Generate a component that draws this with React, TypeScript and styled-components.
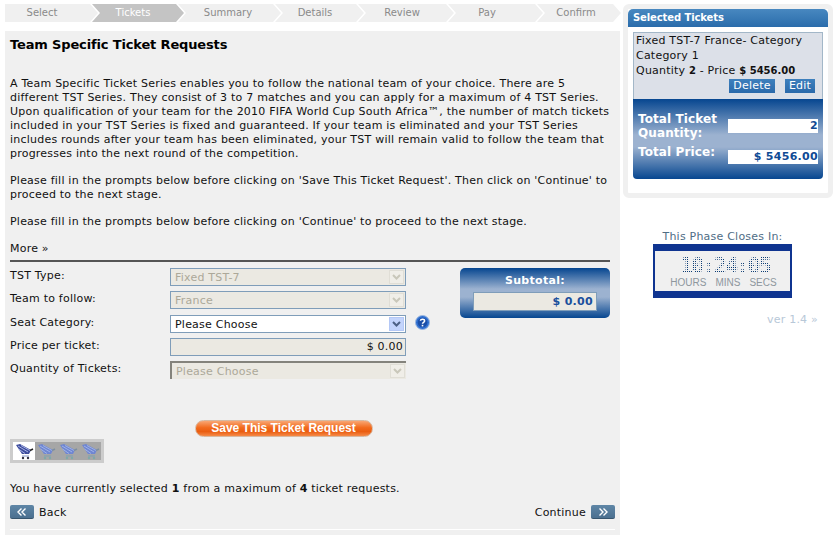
import React from "react";
import styled, { createGlobalStyle } from "styled-components";

const GlobalStyle = createGlobalStyle`
  html, body {
    margin: 0;
    padding: 0;
    background: #fff;
    font-family: "DejaVu Sans", Verdana, sans-serif;
    font-size: 11px;
    letter-spacing: 0.22px;
    color: #111;
  }
`;

const Page = styled("div")`
  display: flex;
  width: 839px;
  height: 540px;
  overflow: hidden;
  padding: 4px 0 0 5px;
  box-sizing: border-box;
`;

const LeftColumn = styled("div")`
  width: 615px;
  flex: none;
  display: flex;
  flex-direction: column;
`;

const StepBar = styled("div")`
  display: flex;
  height: 18px;
  margin-bottom: 9px;
`;

const Step = styled("div")<{ $active?: boolean; $first?: boolean; $width: number; $shift: number }>`
  flex: none;
  width: ${(p) => p.$width}px;
  height: 18px;
  box-sizing: border-box;
  line-height: 17px;
  text-align: center;
  margin-right: -6px;
  padding-right: ${(p) => p.$shift}px;
  font-size: 10px;
  letter-spacing: 0;
  background: ${(p) => (p.$active ? "#c4c4c4" : "#f0f0f0")};
  color: ${(p) => (p.$active ? "#fff" : "#8a8a8a")};
  clip-path: ${(p) =>
    p.$first
      ? "polygon(0 0, calc(100% - 8px) 0, 100% 50%, calc(100% - 8px) 100%, 0 100%)"
      : "polygon(0 0, calc(100% - 8px) 0, 100% 50%, calc(100% - 8px) 100%, 0 100%, 8px 50%)"};
`;

const MainPanel = styled("div")`
  background: #f0f0f0;
  height: 504px;
  padding: 0 5px;
  box-sizing: border-box;
  display: flex;
  flex-direction: column;
`;

const Title = styled("h1")`
  margin: 6px 0 24px;
  font-size: 13px;
  line-height: 16px;
  font-weight: bold;
  letter-spacing: -0.15px;
  color: #000;
`;

const Para = styled("p")`
  margin: 0 0 13px;
  line-height: 14px;
  font-size: 11px;
  white-space: nowrap;
`;

const Rule = styled("div")`
  height: 2px;
  width: 600px;
  background: #555;
  margin: -9px 0 6px;
`;

const FormArea = styled("div")`
  display: flex;
  height: 150px;
`;

const Fields = styled("div")`
  width: 450px;
  flex: none;
  display: flex;
  flex-direction: column;
  gap: 5px;
`;

const FieldRow = styled("div")<{ $nudge?: boolean }>`
  display: flex;
  align-items: center;
  height: 18px;
  margin-top: ${(p) => (p.$nudge ? 1 : 0)}px;
`;

const FieldLabel = styled("span")`
  width: 160px;
  margin-top: -4px;
  flex: none;
`;

const SelectBox = styled("div")<{ $disabled?: boolean; $inset?: boolean }>`
  width: 236px;
  height: 18px;
  box-sizing: border-box;
  display: flex;
  align-items: center;
  justify-content: space-between;
  padding: 0 1px 0 4px;
  border: 1px solid #7f9db9;
  ${(p) => p.$inset && "border-color: #84837c #ebe9e2 #ebe9e2 #84837c; border-width: 2px 0 0 2px;"}
  background: ${(p) => (p.$disabled ? "#ebe9e2" : "#fff")};
  color: ${(p) => (p.$disabled ? "#aca899" : "#111")};
`;

const ArrowBox = styled("div")<{ $disabled?: boolean }>`
  width: 15px;
  height: 14px;
  display: flex;
  align-items: center;
  justify-content: center;
  background: ${(p) => (p.$disabled ? "#f0eee8" : "#c3d4fc")};
  border: 1px solid ${(p) => (p.$disabled ? "#e0ded6" : "#b4c8f6")};
  box-sizing: border-box;
`;

const PriceBox = styled("div")`
  width: 236px;
  height: 18px;
  box-sizing: border-box;
  border: 1px solid #7f9db9;
  background: #ebe9e2;
  text-align: right;
  line-height: 16px;
  padding-right: 2px;
`;

const HelpIcon = styled("svg")`
  margin: -3px 0 0 9px;
  flex: none;
`;

const SubtotalBox = styled("div")`
  width: 150px;
  height: 50px;
  flex: none;
  border-radius: 5px;
  background: linear-gradient(#064690 0%, #9cb2d0 42%, #9cb2d0 58%, #064690 100%);
  display: flex;
  flex-direction: column;
  align-items: center;
  color: #fff;
  font-weight: bold;
  letter-spacing: 0.3px;
  padding-top: 6px;
  box-sizing: border-box;
`;

const SubtotalValue = styled("div")`
  width: 124px;
  height: 19px;
  margin-top: 5px;
  box-sizing: border-box;
  border: 1px solid #7f9db9;
  background: #ebe9e2;
  color: #1a4f9c;
  text-align: right;
  line-height: 17px;
  padding-right: 3px;
`;

const SaveRow = styled("div")`
  display: flex;
  justify-content: center;
  padding-right: 58px;
  margin-top: 2px;
`;

const SaveButton = styled("button")`
  width: 178px;
  height: 17px;
  padding: 0;
  border: 1px solid #d8b8a0;
  border-radius: 9px;
  background: linear-gradient(#f9a673 0%, #f26a1d 45%, #ea5d10 70%, #f58a48 100%);
  color: #fff;
  font-family: "Liberation Sans", Arial, sans-serif;
  font-size: 12px;
  font-weight: bold;
  letter-spacing: 0;
  line-height: 15px;
`;

const CartStrip = styled("div")`
  width: 94px;
  height: 24px;
  margin-top: 2px;
  background: #cccccc;
  padding: 3px;
  box-sizing: border-box;
  display: flex;
`;

const CartCell = styled("div")<{ $on?: boolean }>`
  width: 22px;
  height: 18px;
  background: ${(p) => (p.$on ? "#fff" : "#a6a6a6")};
  display: flex;
  align-items: center;
  justify-content: center;
`;

const SelectedNote = styled("p")`
  margin: 19px 0 0;
  line-height: 14px;
`;

const NavRow = styled("div")`
  display: flex;
  justify-content: space-between;
  align-items: center;
  margin-top: 9px;
  height: 14px;
`;

const NavLink = styled("div")`
  display: flex;
  align-items: center;
  gap: 5px;
`;

const NavButton = styled("div")`
  width: 24px;
  height: 14px;
  border-radius: 2px;
  background: linear-gradient(#5f86a6, #4b7090);
  border-bottom: 1px solid #37556e;
  box-sizing: border-box;
  display: flex;
  align-items: center;
  justify-content: center;
`;

const BottomLine = styled("div")`
  height: 1px;
  background: #fff;
  margin-top: 10px;
`;

const SideColumn = styled("div")`
  margin-left: 3px;
  width: 210px;
  flex: none;
  display: flex;
  flex-direction: column;
`;

const SidePanel = styled("div")`
  height: 194px;
  border: 5px solid #f0f0f0;
  border-radius: 6px;
  box-sizing: border-box;
  background: #fff;
  width: 210px;
`;

const SideHeader = styled("div")`
  height: 18px;
  background: linear-gradient(#4888c0, #2a6cab);
  border-radius: 5px 5px 0 0;
  color: #fff;
  font-size: 10px;
  font-weight: bold;
  line-height: 18px;
  padding-left: 5px;
  letter-spacing: -0.1px;
  width: 200px;
  box-sizing: border-box;
`;

const TicketBox = styled("div")`
  width: 190px;
  height: 67px;
  margin: 5px 0 0 5px;
  box-sizing: border-box;
  background: #dce0e8;
  border: 1px solid #a3b7c8;
  border-bottom: 0;
  padding: 0 2px;
  line-height: 15px;
  white-space: nowrap;

  b {
    font-size: 10px;
    letter-spacing: 0;
  }
`;

const TicketActions = styled("div")`
  display: flex;
  justify-content: flex-end;
  gap: 10px;
  margin-top: 1px;
  padding-right: 5px;
`;

const TicketAction = styled("div")<{ $wide?: boolean }>`
  width: ${(p) => (p.$wide ? 46 : 30)}px;
  height: 14px;
  background: linear-gradient(#3e80bd, #2a69aa);
  color: #fff;
  text-align: center;
  line-height: 14px;
`;

const TotalsBox = styled("div")`
  width: 190px;
  height: 80px;
  margin-left: 5px;
  box-sizing: border-box;
  border-radius: 0 0 4px 4px;
  background: linear-gradient(#064690 0%, #9cb2d0 45%, #9cb2d0 60%, #064690 100%);
  padding: 13px 5px 0 5px;
  display: grid;
  grid-template-columns: 90px 90px;
  align-content: start;
  row-gap: 5px;
  color: #fff;
  font-weight: bold;
  font-size: 12px;
  line-height: 14px;
  letter-spacing: 0.1px;
`;

const TotalValue = styled("div")<{ $low?: boolean }>`
  background: #fff;
  color: #0f4a94;
  height: 14px;
  width: 90px;
  text-align: right;
  font-size: 11px;
  letter-spacing: 0.3px;
  margin-top: ${(p) => (p.$low ? 5 : 7)}px;
`;

const PhaseLabel = styled("div")`
  margin-top: 32px;
  width: 139px;
  margin-left: 30px;
  text-align: center;
  color: #4f6d85;
  line-height: 14px;
  white-space: nowrap;
`;

const ClockFrame = styled("div")`
  width: 139px;
  height: 54px;
  margin-left: 30px;
  box-sizing: border-box;
  border: 2px solid #0f3490;
  border-width: 7px 2px;
  background: #f0f0f0;
  display: flex;
  flex-direction: column;
  align-items: center;
`;

const ClockDigits = styled("div")`
  font-family: "DejaVu Sans Mono", monospace;
  font-size: 22px;
  line-height: 22px;
  margin-top: 4px;
  margin-left: 5px;
  letter-spacing: -2px;
  font-weight: bold;
  color: transparent;
  background-image: conic-gradient(#0c3c74 25%, transparent 0);
  background-size: 2px 2px;
  -webkit-background-clip: text;
  background-clip: text;
`;

const ClockUnits = styled("div")`
  display: flex;
  gap: 9px;
  color: #8e979e;
  font-family: "Liberation Sans", Arial, sans-serif;
  font-size: 10px;
  letter-spacing: 0;
  line-height: 12px;
  margin-left: 2px;
`;

const Version = styled("div")`
  margin: 15px 0 0 144px;
  color: #b8c8d8;
  line-height: 14px;
  white-space: nowrap;
`;

const DownArrow = ({ color }: { color: string }) => (
  <svg width="9" height="6" viewBox="0 0 9 6">
    <path d="M1 1 L4.5 4.5 L8 1" fill="none" stroke={color} strokeWidth="2" />
  </svg>
);

const Select = ({ value, inset, active }: { value: string; inset?: boolean; active?: boolean }) => (
  <SelectBox $disabled={!active} $inset={inset}>
    <span>{value}</span>
    <ArrowBox $disabled={!active}>
      <DownArrow color={active ? "#4d6185" : "#c9c7ba"} />
    </ArrowBox>
  </SelectBox>
);

const Chevrons = ({ left }: { left?: boolean }) => (
  <svg width="10" height="8" viewBox="0 0 10 8">
    <path
      d={left ? "M4.5 0.5 L1 4 L4.5 7.5 M8.5 0.5 L5 4 L8.5 7.5" : "M1.5 0.5 L5 4 L1.5 7.5 M5.5 0.5 L9 4 L5.5 7.5"}
      fill="none"
      stroke="#fff"
      strokeWidth="1.4"
    />
  </svg>
);

const CartIcon = ({ on }: { on?: boolean }) => (
  <svg width="20" height="17" viewBox="0 0 20 17">
    <path d="M2 2 L6 1 L17 7 L15 11 L8 11 Z" fill={on ? "#3d4c9c" : "#6f86d2"} />
    <path d="M4 3 L14 9 M7 2.5 L16 7.5 M4.5 6 L11 10.5" stroke={on ? "#a6b2e6" : "#9fb2e6"} strokeWidth="1" />
    <path d="M16 7.5 L19 6" stroke={on ? "#222" : "#7d8fa0"} strokeWidth="1.4" />
    <path d="M8 13 h7" stroke={on ? "#8898c8" : "#7f9fb0"} strokeWidth="1" />
    <circle cx="9" cy="15" r="1.2" fill={on ? "#334" : "#7fa8a8"} />
    <circle cx="14" cy="15" r="1.2" fill={on ? "#334" : "#7fa8a8"} />
  </svg>
);

const steps = [
  { label: "Select", width: 93, shift: 19 },
  { label: "Tickets", width: 92, shift: 10 },
  { label: "Summary", width: 103, shift: 3 },
  { label: "Details", width: 89, shift: 9 },
  { label: "Review", width: 96, shift: 8 },
  { label: "Pay", width: 95, shift: 17 },
  { label: "Confirm", width: 84, shift: 6 },
];

export default function App() {
  return (
    <>
      <GlobalStyle />
      <Page>
        <LeftColumn>
          <StepBar>
            {steps.map((s, i) => (
              <Step key={s.label} $active={s.label === "Tickets"} $first={i === 0} $width={s.width} $shift={s.shift}>
                {s.label}
              </Step>
            ))}
          </StepBar>
          <MainPanel>
            <Title>Team Specific Ticket Requests</Title>
            <Para>
              A Team Specific Ticket Series enables you to follow the national team of your choice. There are 5
              <br />
              different TST Series. They consist of 3 to 7 matches and you can apply for a maximum of 4 TST Series.
              <br />
              Upon qualification of your team for the 2010 FIFA World Cup South Africa™, the number of match tickets
              <br />
              included in your TST Series is fixed and guaranteed. If your team is eliminated and your TST Series
              <br />
              includes rounds after your team has been eliminated, your TST will remain valid to follow the team that
              <br />
              progresses into the next round of the competition.
            </Para>
            <Para>
              Please fill in the prompts below before clicking on 'Save This Ticket Request'. Then click on 'Continue' to
              <br />
              proceed to the next stage.
            </Para>
            <Para>Please fill in the prompts below before clicking on 'Continue' to proceed to the next stage.</Para>
            <Para>More »</Para>
            <Rule />
            <FormArea>
              <Fields>
                <FieldRow>
                  <FieldLabel>TST Type:</FieldLabel>
                  <Select value="Fixed TST-7" />
                </FieldRow>
                <FieldRow>
                  <FieldLabel>Team to follow:</FieldLabel>
                  <Select value="France" />
                </FieldRow>
                <FieldRow $nudge>
                  <FieldLabel>Seat Category:</FieldLabel>
                  <Select value="Please Choose" active />
                  <HelpIcon width="15" height="15" viewBox="0 0 15 15">
                    <circle cx="7.5" cy="7.5" r="7" fill="#2f6fd0" stroke="#9db8e0" />
                    <circle cx="7.5" cy="7.5" r="4.8" fill="#1c4fa8" />
                    <path d="M5.4 5.8 C5.6 3.8 9.6 3.8 9.6 5.9 C9.6 7.4 7.5 7.2 7.5 8.8" fill="none" stroke="#fff" strokeWidth="1.5" />
                    <rect x="6.7" y="9.8" width="1.6" height="1.6" fill="#fff" />
                  </HelpIcon>
                </FieldRow>
                <FieldRow>
                  <FieldLabel>Price per ticket:</FieldLabel>
                  <PriceBox>$ 0.00</PriceBox>
                </FieldRow>
                <FieldRow>
                  <FieldLabel>Quantity of Tickets:</FieldLabel>
                  <Select value="Please Choose" inset />
                </FieldRow>
              </Fields>
              <SubtotalBox>
                Subtotal:
                <SubtotalValue>$ 0.00</SubtotalValue>
              </SubtotalBox>
            </FormArea>
            <SaveRow>
              <SaveButton>Save This Ticket Request</SaveButton>
            </SaveRow>
            <CartStrip>
              <CartCell $on>
                <CartIcon on />
              </CartCell>
              <CartCell>
                <CartIcon />
              </CartCell>
              <CartCell>
                <CartIcon />
              </CartCell>
              <CartCell>
                <CartIcon />
              </CartCell>
            </CartStrip>
            <SelectedNote>
              You have currently selected <b>1</b> from a maximum of <b>4</b> ticket requests.
            </SelectedNote>
            <NavRow>
              <NavLink>
                <NavButton>
                  <Chevrons left />
                </NavButton>
                Back
              </NavLink>
              <NavLink>
                Continue
                <NavButton>
                  <Chevrons />
                </NavButton>
              </NavLink>
            </NavRow>
            <BottomLine />
          </MainPanel>
        </LeftColumn>
        <SideColumn>
          <SidePanel>
            <SideHeader>Selected Tickets</SideHeader>
            <TicketBox>
              Fixed TST-7 France- Category
              <br />
              Category 1
              <br />
              Quantity <b>2</b> - Price <b>$ 5456.00</b>
              <TicketActions>
                <TicketAction $wide>Delete</TicketAction>
                <TicketAction>Edit</TicketAction>
              </TicketActions>
            </TicketBox>
            <TotalsBox>
              <div>
                Total Ticket
                <br />
                Quantity:
              </div>
              <TotalValue>2</TotalValue>
              <div>Total Price:</div>
              <TotalValue $low>$ 5456.00</TotalValue>
            </TotalsBox>
          </SidePanel>
          <PhaseLabel>This Phase Closes In:</PhaseLabel>
          <ClockFrame>
            <ClockDigits>10:24:05</ClockDigits>
            <ClockUnits>
              <span>HOURS</span>
              <span>MINS</span>
              <span>SECS</span>
            </ClockUnits>
          </ClockFrame>
          <Version>ver 1.4 »</Version>
        </SideColumn>
      </Page>
    </>
  );
}
